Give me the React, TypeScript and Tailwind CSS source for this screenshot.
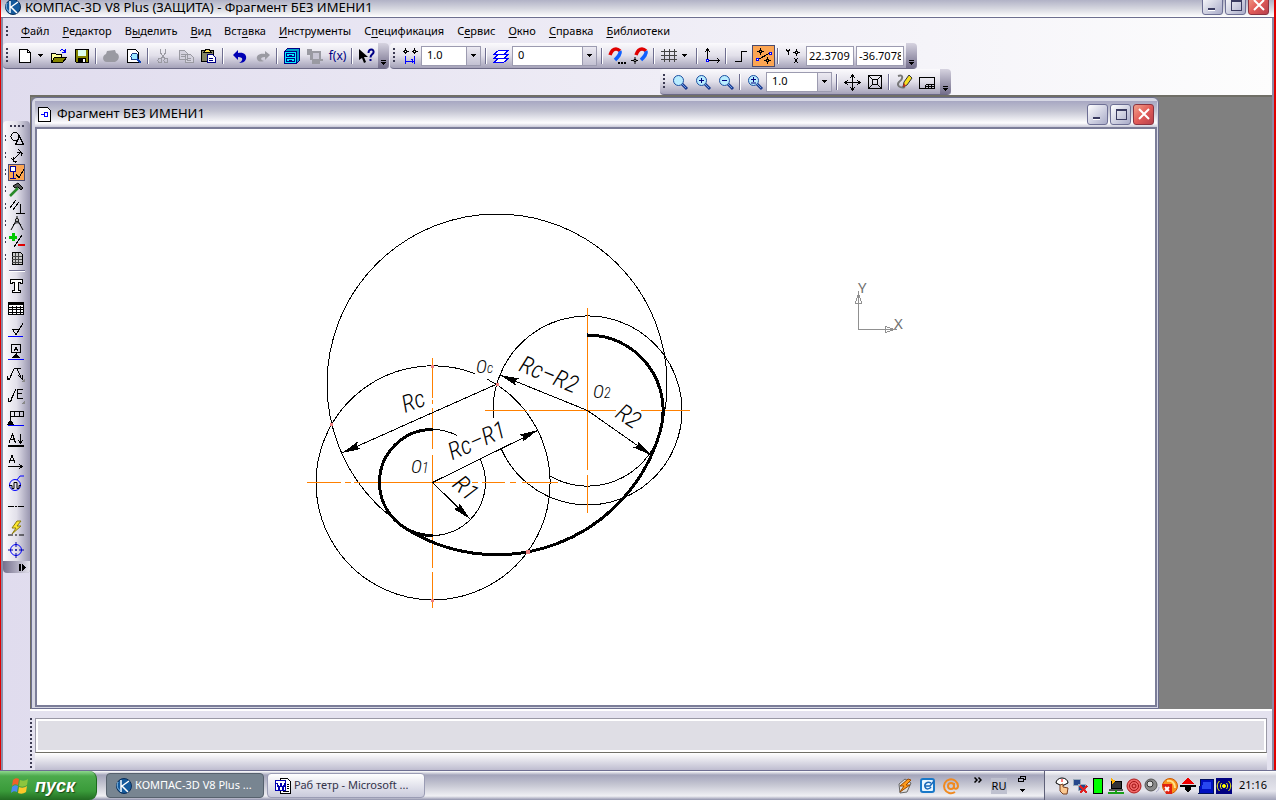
import type { ReactNode } from "react";
import { useState } from "react";

type IconProps = { children: ReactNode; smooth?: boolean };

function Icon({ children, smooth }: IconProps) {
  return (
    <svg
      width="16"
      height="16"
      viewBox="0 0 16 16"
      fill="none"
      stroke="#000"
      shapeRendering={smooth ? "auto" : "crispEdges"}
      className="block shrink-0 overflow-visible"
      aria-hidden="true"
    >
      {children}
    </svg>
  );
}

const icons: Record<string, ReactNode> = {
  new: (
    <Icon>
      <path d="M2.5 1.5h8l3 3v10h-11z" fill="#fff" />
      <path d="M10.5 1.5v3h3" />
    </Icon>
  ),
  open: (
    <Icon>
      <path d="M0.5 14V5.5h4l1 1h5v3" fill="#ffff9c" />
      <path d="M0.5 14.5l3-5h12l-4 5z" fill="#848400" />
      <path d="M9 3c1-2 4-2 5 1M14.5 1v3.5h-4" stroke="#00f" />
    </Icon>
  ),
  save: (
    <Icon>
      <path d="M1.5 1.5h13v13h-12l-1-1z" fill="#848400" />
      <path d="M4 2h8v6H4z" fill="#dfe" stroke="none" />
      <path d="M4 10h8v4H4z" fill="#000" stroke="none" />
      <path d="M9 11h2v3H9z" fill="#fff" stroke="none" />
    </Icon>
  ),
  print: (
    <Icon smooth>
      <path d="M4 3l8-1 1 3c4 1 4 7-1 9H4C-1 14-1 7 3 6z" fill="#9a9aa2" stroke="none" />
    </Icon>
  ),
  preview: (
    <Icon>
      <path d="M1.5 1.5h8l3 3v10h-11z" fill="#fff" />
      <circle cx="8.500" cy="8.500" r="3.500" fill="#9ce7ff" stroke="#1b3a8a" />
      <path d="M11 11l4 4" stroke="#1040b0" strokeWidth="2" />
    </Icon>
  ),
  cut: (
    <Icon>
      <g stroke="#9a9aa2">
        <path d="M5.500 1v4l4 5M10.500 1v4l-4 5" />
        <circle cx="5" cy="12.500" r="2" />
        <circle cx="11" cy="12.500" r="2" />
      </g>
    </Icon>
  ),
  copy: (
    <Icon>
      <g stroke="#9a9aa2" fill="#d4d2de">
        <path d="M1.500 2.500h5l3 3v6h-8zM7.500 6.500h5l3 3v5h-8z" />
        <path d="M3 6h4M3 8h4M9 10h4M9 12h4" />
      </g>
    </Icon>
  ),
  paste: (
    <Icon>
      <path d="M0.500 2.500h12v11h-12z" fill="#848463" />
      <path d="M3 4l2-3h3l2 3z" fill="#ffe34d" />
      <path d="M6.500 6.500h5l3 3v5h-8z" fill="#fff" stroke="#000084" />
      <path d="M8 10h4M8 12h4" stroke="#000084" />
    </Icon>
  ),
  undo: (
    <Icon smooth>
      <path d="M1 7l5-5v3c6-1 9 2 8 6-1 3-4 4-7 4 4-2 5-6-1-6v3z" fill="#0000b4" stroke="none" />
    </Icon>
  ),
  redo: (
    <Icon smooth>
      <path d="M15 7l-5-4v3C4 5 1 8 2 11c1 3 4 3 7 2-4-1-4-4 1-4v3z" fill="#9a9aa2" stroke="none" />
    </Icon>
  ),
  library: (
    <Icon>
      <path d="M0.500 3.500l3-3h12v12l-3 3h-12z" fill="#00a0c8" stroke="#000084" />
      <path d="M0.500 3.500h12v12h-12z" fill="#00f0ff" stroke="#000084" />
      <path d="M2.500 5.500h8v3h-8zM2.500 10.500h8v3h-8zM5 7.500h3M5 12.500h3" stroke="#000084" />
    </Icon>
  ),
  frame: (
    <Icon>
      <path d="M0 1h5v2h9v8h2v2h-3v3H5v-4H3V7H0z" fill="#9a9aa2" stroke="none" />
      <path d="M6 5h6v6H6z" fill="#c8c6d4" stroke="none" />
    </Icon>
  ),
  whatsThis: (
    <Icon smooth>
      <path d="M0 1v11l3-2 2 5 2-1-2-5h4z" fill="#000" stroke="none" />
      <path d="M9.500 5c0-5 6-4 5-.5-.4 2-3 2-3 5" stroke="#000084" strokeWidth="2" />
      <path d="M10.500 11h2v2h-2z" fill="#000084" stroke="none" />
    </Icon>
  ),
  step: (
    <Icon>
      <path d="M3.500 0v6M0.500 3.500h6M12.500 0v6M9.500 3.500h6" />
      <path d="M2.500 2.500h2v2h-2zM11.500 2.500h2v2h-2z" fill="#fff" />
      <path d="M3.500 8v8M12.500 8v8M3.500 13.500h8M9.500 11l2 2.500-2 2" stroke="#00f" />
    </Icon>
  ),
  layers: (
    <Icon>
      <g stroke="#00f" fill="#fff">
        <path d="M0.500 14.500l5-4h10l-5 4z" />
        <path d="M0.500 10.500l5-4h10l-5 4z" />
        <path d="M0.500 6.500l5-4h10l-5 4z" />
      </g>
    </Icon>
  ),
  magnetDots: (
    <Icon smooth>
      <path d="M1 7c1-3 3-6 6-6 2 0 3 1 4 2" stroke="#e00000" strokeWidth="3.500" />
      <path d="M11 3c1 3-2 6-5 9" stroke="#1060ff" strokeWidth="3.500" />
      <path d="M9 14h2v2H9zM12 14h2v2h-2zM15 14h2v2h-2z" fill="#000" stroke="none" />
    </Icon>
  ),
  magnet: (
    <Icon smooth>
      <path d="M4 7c1-3 3-6 6-6 2 0 3 1 4 2" stroke="#e00000" strokeWidth="3.500" />
      <path d="M14 3c1 3-2 6-5 9" stroke="#1060ff" strokeWidth="3.500" />
      <path d="M3 9v7M-1 12.500h7" />
      <path d="M2 11.500h2v2H2z" fill="#fff" />
    </Icon>
  ),
  grid: (
    <Icon>
      <path d="M3.500 1v13M8.500 1v13M13.500 1v13M0 3.500h16M0 7.500h16M0 11.500h16" stroke="#444" />
    </Icon>
  ),
  axes: (
    <Icon>
      <path d="M3.500 12V1M1 4l2.500-3L6 4M4 12.500h12M13 10l2.500 2.500L13 15" />
      <path d="M2.500 11.500h2v2h-2z" fill="#fff" stroke="#00f" />
    </Icon>
  ),
  ortho: (
    <Icon>
      <path d="M2 13.500h6v-10h6" />
    </Icon>
  ),
  snap: (
    <Icon>
      <path d="M4.500 0v7M1 3.500h7M11.500 9v7M8 12.500h7" />
      <path d="M3.500 2.500h2v2h-2zM10.500 11.500h2v2h-2z" fill="#f8a050" />
      <path d="M1 12l13-7" />
      <path d="M0.500 10.500h2v2h-2zM13.500 4.500h2v2h-2z" fill="#fff" stroke="#00f" />
    </Icon>
  ),
  yx: (
    <Icon>
      <path d="M1 1l2 3 2-3M3 4v3M9 10l4 5M13 10l-4 5M11.500 1v7M8 4.500h7" />
      <path d="M10.500 3.500h2v2h-2z" fill="#fff" />
    </Icon>
  ),
  zoomArea: <Magnifier />,
  zoomIn: <Magnifier sign="M3.500 6h5M6 3.500v5" />,
  zoomOut: <Magnifier sign="M3.500 6h5" />,
  zoomScale: <Magnifier sign="M3.500 5h5M6 2.500v5M3.500 8.500h5" />,
  pan: (
    <Icon>
      <path d="M8.500 1v14M1 8.500h15M6 4l2.500-3L11 4M6 13l2.500 3 2.500-3M4 6L1 8.500 4 11M13 6l3 2.500-3 2.500" />
    </Icon>
  ),
  fit: (
    <Icon>
      <path d="M1.500 1.500h13v13h-13zM5.500 5.500h5v5h-5zM2 2l4 4M14 2l-4 4M2 14l4-4M14 14l-4-4" />
    </Icon>
  ),
  refresh: (
    <Icon smooth>
      <path d="M2 2c6-2 5 3 1 6-3 3 1 7 6 5" stroke="#777" strokeWidth="2" />
      <path d="M7 13l1-5 5-7 3 3-5 7z" fill="#f8e020" stroke="#333" />
      <path d="M7 13l3-1-2-3z" fill="#d03020" stroke="none" />
    </Icon>
  ),
  layout: (
    <Icon>
      <path d="M0.500 3.500h15v11h-15zM6.500 10.500h9M9.500 10.500v4M12.500 10.500v4M6.500 10.500v4M6.500 12.500h9" />
    </Icon>
  ),
};

function Magnifier({ sign }: { sign?: string }) {
  return (
    <Icon smooth>
      <path d="M10 10l5 5" stroke="#1a3a90" strokeWidth="3" />
      <path d="M10 10l4 4" stroke="#6ca0e8" />
      <circle cx="6.500" cy="6.500" r="5" fill="#b8ecff" stroke="#1c4fa0" />
      {sign && <path d={sign} stroke="#00007c" transform="translate(.5 .5)" />}
    </Icon>
  );
}

function ToolButton({ name, label, active }: { name: string; label: string; active?: boolean }) {
  return (
    <button
      aria-label={label}
      className={
        active
          ? "flex h-[22px] w-[23px] shrink-0 items-center justify-center border border-[#4b4b6f] bg-[#fca552]"
          : "flex h-[22px] w-[23px] shrink-0 items-center justify-center"
      }
    >
      {icons[name]}
    </button>
  );
}

function Separator() {
  return (
    <span className="flex w-[6px] shrink-0 justify-center">
      <span className="h-4 w-[2px] border-r border-white bg-[#6e6d8f]" />
    </span>
  );
}

function Grip() {
  return <span className="mx-[3px] h-[15px] w-[2px] shrink-0 bg-[repeating-linear-gradient(#3c3b52_0_2px,transparent_2px_4px)]" />;
}

function DropArrow() {
  return (
    <svg width="5" height="3" viewBox="0 0 5 3" className="block" shapeRendering="crispEdges" aria-hidden="true">
      <path d="M0 0h5L2.500 3z" />
    </svg>
  );
}

function Overflow() {
  return (
    <button
      aria-label="Параметры панели"
      className="ml-auto flex h-[25px] w-[11px] shrink-0 flex-col items-center justify-end gap-px rounded-r-sm bg-gradient-to-b from-[#d6d3e0] to-[#75708c] pb-[3px]"
    >
      <span className="h-px w-[5px] bg-black" />
      <DropArrow />
    </button>
  );
}

function Toolbar({ children, label }: { children: ReactNode; label: string }) {
  return (
    <div
      role="toolbar"
      aria-label={label}
      className="flex h-[26px] items-center rounded-sm border-b border-[#6c6a86] bg-gradient-to-b from-[#fbfafd] via-[#e2e0ea] to-[#a5a2b9]"
    >
      {children}
    </div>
  );
}

function Combo({ label, options, width }: { label: string; options: string[]; width: string }) {
  const [value, setValue] = useState(options[0]);

  return (
    <span className={`relative flex h-5 shrink-0 border border-[#9c9bb0] bg-white ${width}`}>
      <select
        aria-label={label}
        value={value}
        onChange={(e) => setValue(e.target.value)}
        className="w-full appearance-none bg-transparent pl-[5px] text-[11px] outline-none"
      >
        {options.map((option) => (
          <option key={option}>{option}</option>
        ))}
      </select>
      <span className="pointer-events-none absolute inset-y-0 right-0 flex w-[14px] items-center justify-center border-l border-[#9c9bb0] bg-gradient-to-b from-[#eceaf2] to-[#c3c1d2]">
        <DropArrow />
      </span>
    </span>
  );
}

function CoordInput({ label, initial }: { label: string; initial: string }) {
  const [value, setValue] = useState(initial);
  return (
    <input
      aria-label={label}
      value={value}
      onChange={(e) => setValue(e.target.value)}
      className="mr-[2px] h-5 w-12 shrink-0 border border-[#9c9bb0] bg-white px-[2px] text-[11px] outline-none"
    />
  );
}

function WindowButtons() {
  const base = "flex h-[21px] w-[21px] items-center justify-center rounded-[3px] border border-[#6d6f94]";
  return (
    <div className="flex gap-[2px]">
      <button aria-label="Свернуть" className={`${base} bg-gradient-to-br from-white to-[#a9abc8]`}>
        <Icon>
          <path d="M3 11h7v3H3z" fill="#fff" stroke="none" />
          <path d="M3 11h7v2H3z" fill="#3a3b60" stroke="none" />
        </Icon>
      </button>
      <button aria-label="Развернуть" className={`${base} bg-gradient-to-br from-white to-[#a9abc8]`}>
        <Icon>
          <path d="M3.500 3.500h10v10h-10z" stroke="#3a3b60" />
          <path d="M3 3h11v2H3z" fill="#3a3b60" stroke="none" />
        </Icon>
      </button>
      <button aria-label="Закрыть" className={`${base} border-[#8c3340] bg-gradient-to-br from-[#f0a08c] via-[#e25b58] to-[#b8404c]`}>
        <Icon smooth>
          <path d="M3 3l10 10M13 3L3 13" stroke="#fff" strokeWidth="2" />
        </Icon>
      </button>
    </div>
  );
}

function KompasLogo() {
  return (
    <svg width="16" height="16" viewBox="0 0 16 16" className="shrink-0" fill="none" aria-hidden="true">
      <circle cx="8" cy="8" r="7.500" fill="#155a9c" stroke="#0a2d58" />
      <path d="M5 2v12M13 3L6 8l6 6" stroke="#fff" strokeWidth="1.500" />
      <path d="M2 4c-2 4 0 8 3 9" stroke="#8cc4f0" />
    </svg>
  );
}

// each entry: text before the hot key, the hot key, the rest
const menu = [
  ["", "Ф", "айл"],
  ["", "Р", "едактор"],
  ["В", "ы", "делить"],
  ["", "В", "ид"],
  ["Вст", "а", "вка"],
  ["", "И", "нструменты"],
  ["С", "п", "ецификация"],
  ["С", "е", "рвис"],
  ["", "О", "кно"],
  ["", "С", "правка"],
  ["", "Б", "иблиотеки"],
];

const modes: { label: string; active?: boolean; icon: ReactNode }[] = [
  { label: "Геометрия", icon: <Icon><circle cx="6" cy="5.500" r="4" /><path d="M6.500 13.500l4-8 4 8z" fill="#d9d7e4" /></Icon> },
  { label: "Размеры", icon: <Icon><path d="M4 12l8-8M4 9v4h4M8 4h4v4M2 10l5 5M9 1l5 5" /></Icon> },
  {
    label: "Обозначения",
    active: true,
    icon: <Icon><path d="M1.500 1.500h5v5h-5z" fill="#fff" stroke="#00009c" /><path d="M4 7v6M1 13.500h6" stroke="#00009c" /><path d="M7 9l3 4 5-9" /></Icon>,
  },
  { label: "Редактирование", icon: <Icon smooth><path d="M4 4l5-3 5 5-2 2-3-3-3 1z" fill="#555" /><path d="M9 6l-8 8" stroke="#2a8a2a" strokeWidth="2.500" /></Icon> },
  { label: "Параметризация", icon: <Icon><path d="M1 9l6-8M4 11l6-8M11.500 5v9M7 14.500h9" /></Icon> },
  { label: "Измерения", icon: <Icon smooth><path d="M8 3L2 14M8 3l6 11M4 9c3-3 6-3 8 0M8 0v3" /><circle cx="8" cy="4" r="1.500" fill="#fff" /></Icon> },
  { label: "Выделение", icon: <Icon><path d="M4.500 0v8M0 4h8" stroke="#00c800" strokeWidth="3" /><path d="M13 2L5 14" /><path d="M9 12h7" stroke="#e00000" strokeWidth="2" /></Icon> },
  { label: "Спецификация", icon: <Icon><path d="M3.500 2.500h8l2 2v10h-10z" fill="#ccc" /><path d="M6.500 3v11M9.500 3v11M3 6.500h10M3 9.500h10M3 12.500h10" stroke="#444" /></Icon> },
];

const marks: { label: string; icon: ReactNode }[] = [
  { label: "Ввод текста", icon: <Icon><path d="M2.500 1.500h12v4h-2v-1h-2v8h2v2h-8v-2h2v-8h-2v1h-2z" fill="#fff" /></Icon> },
  { label: "Ввод таблицы", icon: <Icon><path d="M0.500 2.500h15v12h-15z" fill="#fff" /><path d="M1 4h14" strokeWidth="2" /><path d="M0 7.500h16M0 9.500h16M0 12.500h16M4.500 6v8M8.500 6v8M12.500 6v8" /></Icon> },
  { label: "Шероховатость", icon: <Icon><path d="M4 7.500h8M5 8l3 5 7-12" /><path d="M0 14.500h15" stroke="#00f" /></Icon> },
  { label: "База", icon: <Icon><path d="M3.500 0.500h9v8h-9zM8 8v4M6.500 7l1-4h1l1 4M6.500 5.500h3" /><path d="M5 13l3-3 3 3z" fill="#000" /><path d="M0 15.500h16" stroke="#00f" /></Icon> },
  { label: "Линия-выноска", icon: <Icon><path d="M6 2.500h7M6 3L1 14M9 3l4 8M-1 10v4l3-2M10 9l4 4v-4" /><path d="M17 12v4h-4z" fill="#888" stroke="none" /></Icon> },
  { label: "Обозначение позиций", icon: <Icon><path d="M8 1L2 14M0 10l1 4 3-2M15 1.500H9.500v9H15M9 5.500h5" /><path d="M17 12v4h-4z" fill="#888" stroke="none" /></Icon> },
  { label: "Допуск формы", icon: <Icon><path d="M2.500 14V1.500h13v5h-13M6.500 1v5M11.500 1v5" /><path d="M0 14l2.500-4L5 14z" fill="#000" /><path d="M0 15.500h16" stroke="#00f" /></Icon> },
  { label: "Линия разреза", icon: <Icon><path d="M1 11L4.500 2l3 9M2 7.500h5M12.500 2v9M10 8l2.500 3L15 8" /><path d="M0 14h16" strokeWidth="2" /></Icon> },
  { label: "Стрелка взгляда", icon: <Icon><path d="M1 9L4 1l3 8M2 6.500h4M0 12.500h14M11 10l3 2.500-3 2.500" /></Icon> },
  { label: "Выносной элемент", icon: <Icon smooth><circle cx="7" cy="9" r="5.500" stroke="#00f" /><path d="M9 4l3-4h4" stroke="#00f" /><path d="M1 9.500h3v3h2v-6h3v6h2v-3h2" /></Icon> },
  { label: "Осевая линия", icon: <Icon><path d="M0 8.500h6M7 8.500h2M10 8.500h6" /></Icon> },
  { label: "Автоосевая", icon: <Icon smooth><path d="M9 1L4 8h4l-4 6 9-8H9l4-5z" fill="#ffe92e" stroke="#8a7a10" /><path d="M0 15h5M7 15h2M11 15h5" /></Icon> },
  { label: "Обозначение центра", icon: <Icon smooth><circle cx="8" cy="8" r="5.500" stroke="#00f" /><path d="M8 0v5M8 7v2M8 11v5M0 8h5M7 8h2M11 8h5" stroke="#0000a0" /></Icon> },
];

function SidePanel() {
  return (
    <div className="w-[27px] shrink-0 pt-[26px]">
      <div
        role="toolbar"
        aria-label="Компактная панель"
        className="rounded-sm bg-gradient-to-r from-[#fbfafd] via-[#e2e0ea] to-[#9a97b0]"
      >
        <div className="flex h-[9px] items-center justify-center">
          <span className="h-[2px] w-[14px] bg-[repeating-linear-gradient(90deg,#3c3b52_0_2px,transparent_2px_4px)]" />
        </div>
        {modes.map((mode) => (
          <div key={mode.label} className="flex h-[17px] items-center">
            <span className="mx-[2px] h-[7px] w-px shrink-0 bg-[repeating-linear-gradient(#3c3b52_0_2px,transparent_2px_4px)]" />
            <button
              aria-label={mode.label}
              className={
                mode.active
                  ? "flex h-[17px] w-[17px] items-center justify-center border border-[#4b4b6f] bg-[#fca552]"
                  : "flex h-[17px] w-[17px] items-center justify-center"
              }
            >
              {mode.icon}
            </button>
          </div>
        ))}
        <div className="flex h-[9px] items-center justify-center">
          <span className="h-[2px] w-4 border-b border-white bg-[#6e6d8f]" />
        </div>
        {marks.map((mark) => (
          <button key={mark.label} aria-label={mark.label} className="flex h-[22px] w-[25px] items-center justify-center">
            {mark.icon}
          </button>
        ))}
        <button
          aria-label="Параметры панели"
          className="flex h-3 w-full items-center justify-end rounded-b-sm bg-gradient-to-r from-[#75708c] to-[#e6e4ee] pr-1"
        >
          <svg width="7" height="7" viewBox="0 0 7 7" shapeRendering="crispEdges" aria-hidden="true">
            <path d="M0 0h2v7H0zM3 0l4 3.500L3 7z" />
          </svg>
        </button>
      </div>
    </div>
  );
}

// dimension arrow head, tip at x/y, angle in degrees
function ArrowHead({ x, y, angle }: { x: number; y: number; angle: number }) {
  return <path d="M0 0l-19-4 3 4-3 4z" fill="#000" stroke="none" transform={`translate(${x} ${y}) rotate(${angle})`} />;
}

function DimText({ x, y, angle, children }: { x: number; y: number; angle: number; children: string }) {
  return (
    <text textAnchor="middle" transform={`translate(${x} ${y}) rotate(${angle})`} className="text-[24px]">
      {children}
    </text>
  );
}

function Drawing() {
  return (
    <svg className="block h-full w-full" role="img" aria-label="Сопряжение окружностей">
      <g transform="translate(-37 -129)" fill="none" stroke="#000" shapeRendering="crispEdges">
        <g>
          <circle cx="497" cy="384" r="170" />
          <path d="M487 379A117 117 0 1 1 475 373.600" />
          <path d="M493.300 418A94.500 94.500 0 1 1 501 448.500" />
          <path d="M432.500 429.500A53 53 0 0 1 457 435.500M480 459A53 53 0 0 1 432.500 535.500" />
          <path d="M660 432A75.500 75.500 0 0 1 549 475.500" />
        </g>

        <g stroke="#ff8000">
          <path d="M307 482.500h34M345 482.500h6M354 482.500h113M472 482.500h6M482 482.500h23M510 482.500h6M522 482.500h36" />
          <path d="M432.500 358v40M432.500 400v4M432.500 408v41M432.500 455v113M432.500 572v36" />
          <path d="M485 410.500h42M529 410.500h87M641 410.500h21M664 410.500h26" />
          <path d="M587.500 308v162M587.500 475v38" />
        </g>

        <g strokeWidth="3">
          <path d="M432.500 429.500A53 53 0 1 0 432.500 535.500" />
          <path d="M587.500 335A75.500 75.500 0 0 1 660 432A170 170 0 0 1 403.500 526.900" />
        </g>

        <path d="M497 384L342 453M432.500 482.500L537 431M432.500 482.500l37.500 36.500M587.500 410.500L500 375M587.500 410.500L651 455" />
        <ArrowHead x={342} y={453} angle={156} />
        <ArrowHead x={538} y={430} angle={-26} />
        <ArrowHead x={470} y={519} angle={44} />
        <ArrowHead x={500} y={375} angle={202} />
        <ArrowHead x={651} y={455} angle={35} />

        <g fill="#f08080" stroke="none">
          <path d="M431 365h3v3h-3zM496 383h3v3h-3zM330 423h3v3h-3zM431 599h3v3h-3zM526 550h4v4h-4z" />
        </g>

        <g stroke="none" fill="#000" className="font-['Roboto_Condensed','Liberation_Sans_Narrow','Roboto',sans-serif] font-light italic">
          <DimText x={416} y={409} angle={-20}>Rc</DimText>
          <DimText x={480} y={448} angle={-24}>Rc–R1</DimText>
          <DimText x={460} y={494} angle={43}>R1</DimText>
          <DimText x={546} y={382} angle={22}>Rc–R2</DimText>
          <DimText x={624} y={423} angle={33}>R2</DimText>
          <text x="476" y="373" className="text-[19px]">O<tspan className="text-[14px]">c</tspan></text>
          <text x="411" y="473" className="text-[19px]">O<tspan className="text-[14px]">1</tspan></text>
          <text x="593" y="398" className="text-[19px]">O<tspan className="text-[14px]">2</tspan></text>
        </g>

        <g stroke="#909090">
          <path d="M858.500 293v36.500H895M858.500 293l-3 10h6zM895 329.500l-10-3v6z" />
          <g stroke="none" fill="#707070" className="text-[15px]">
            <text x="858" y="293">Y</text>
            <text x="894" y="329">X</text>
          </g>
        </g>
      </g>
    </svg>
  );
}

function ChildWindow() {
  return (
    <section className="flex w-[1128px] max-w-full flex-col rounded-t-md border border-[#6d6f8f] bg-[#d6d7e4] pt-[3px] pr-px pb-px pl-[3px]">
      <header className="flex h-[26px] shrink-0 items-center gap-[6px] bg-[linear-gradient(#a7a7c2_0,#c3c4d2_10px,#fdfdfe_22px,#c8c8d8_26px)] pr-[3px] pl-[3px]">
        <svg width="13" height="15" viewBox="0 0 13 15" fill="none" shapeRendering="crispEdges" aria-hidden="true">
          <path d="M0.500 0.500h9l3 3v11h-12z" fill="#fff" stroke="#000" />
          <path d="M3 7.500h3M6.500 5.500h3v4h-3z" stroke="#00f" />
        </svg>
        <h2 className="flex-1 text-[13px]">Фрагмент БЕЗ ИМЕНИ1</h2>
        <WindowButtons />
      </header>
      <div className="min-h-0 flex-1 border-2 border-[#7b7d98] bg-white">
        <Drawing />
      </div>
    </section>
  );
}

const tray: ReactNode[] = [
  <Icon smooth><path d="M2 5a6 5 0 0 1 12 0l-6 3z" fill="#fff" /><path d="M6 7v6l3 3h4l1-6-5-1V6z" fill="#fcc890" stroke="#7a4020" /><path d="M8 1v3" stroke="red" /></Icon>,
  <Icon><path d="M1 1h7v6H1zM6 6h7v6H6z" fill="#24468c" stroke="#9ab" /><path d="M8 8l7 7M15 8l-7 7" stroke="#e02020" strokeWidth="2" /></Icon>,
  <Icon><path d="M3.500 0.500h9v15h-9z" fill="#00ff00" /></Icon>,
  <Icon><path d="M3 3h10v7H3z" fill="#333" /><path d="M1 11h14v2H1z" fill="#555" stroke="none" /><path d="M0 15h16M8 12v3" stroke="#18a018" strokeWidth="2" /><path d="M3 0l5 3-4 3z" fill="#ffb000" stroke="none" /></Icon>,
  <Icon smooth><circle cx="8" cy="8" r="7" fill="#f06868" stroke="#b01818" /><circle cx="8" cy="8" r="4.500" stroke="#a01010" /><circle cx="8" cy="8" r="2" stroke="#a01010" /></Icon>,
  <Icon smooth><circle cx="7" cy="7" r="6" fill="#8a8a8a" stroke="#555" /><circle cx="6" cy="6" r="3" fill="#ddd" stroke="#333" /><path d="M12 14c2-1 3-3 3-5" stroke="#aac" /></Icon>,
  <Icon smooth><circle cx="8" cy="8" r="7.500" fill="#f8941d" stroke="#d05a00" /><path d="M5 3c5-1 8 2 8 7" stroke="#ffe38a" strokeWidth="2" /><path d="M0 6h10v10H4z" fill="#e02010" stroke="none" /><path d="M3 9l4 4M7 9l-4 4" stroke="#fff" strokeWidth="2" /></Icon>,
  <Icon><path d="M8 0L1 6h14z" fill="#f00000" stroke="none" /><path d="M0 7.500h16" strokeWidth="2" /><path d="M5 9h6v2l-3 4-3-4z" fill="#000" stroke="none" /></Icon>,
  <Icon><path d="M3 1h12v14H1z" fill="#0010c0" stroke="#001060" /><path d="M5 4h8v7H4z" fill="#2848f0" stroke="none" /></Icon>,
  <Icon smooth><path d="M0 0h16v16H0z" fill="#000080" stroke="none" /><g stroke="#ffff00"><circle cx="8" cy="8" r="1.500" fill="#ffff00" /><path d="M5.500 5c-1.500 2-1.500 4 0 6M10.500 5c1.500 2 1.500 4 0 6M3.500 3c-3 3-3 7 0 10M12.500 3c3 3 3 7 0 10" /></g></Icon>,
];

function Taskbar() {
  return (
    <footer className="flex h-[30px] shrink-0 items-stretch border-t border-[#6e6f92] bg-[linear-gradient(#fff_0,#a4a5bb_4px,#c6c7d3_14px,#f0f0f4_25px,#8f91ab_29px)]">
      <button className="flex w-[97px] items-center gap-[6px] rounded-r-lg border-r border-[#1b6a1b] bg-[linear-gradient(#8fd88f_0,#4caa4c_5px,#3a9b3a_20px,#226b22_29px)] pl-[11px] text-[18px] font-bold text-white italic [text-shadow:1px_1px_1px_#1b4a1b]">
        <svg width="18" height="18" viewBox="0 0 18 18" aria-hidden="true">
          <path d="M2 3c2-2 4-2 6-1L7 8C5 7 3 7 1 9z" fill="#f0602a" />
          <path d="M9 3c3 1 5 1 8-1l-1 6c-3 2-5 2-8 1z" fill="#8cc63e" />
          <path d="M1 10c2-2 4-2 6-1l-1 6c-2-1-4-1-6 1z" fill="#4a8cf0" />
          <path d="M8 10c3 1 5 1 8-1l-1 6c-3 2-5 2-8 1z" fill="#fcc82a" />
        </svg>
        <span className="font-['Liberation_Sans',sans-serif] leading-[18px]">пуск</span>
      </button>

      <nav className="flex flex-1 items-center gap-[3px] pl-[9px] text-[11px]">
        <button className="flex h-[25px] w-[158px] items-center gap-[3px] rounded-sm border border-[#56616d] bg-[#788591] px-[9px] text-white">
          <KompasLogo />
          <span className="truncate">КОМПАС-3D V8 Plus ...</span>
        </button>
        <button className="flex h-[25px] w-[158px] items-center gap-[3px] rounded-sm border border-[#9a9cb4] bg-gradient-to-b from-white to-[#c9cadb] px-[7px] text-[#33334a]">
          <Icon>
            <path d="M5.500 0.500h7l3 3v12h-10z" fill="#fff" />
            <path d="M0.500 2.500h10v10h-10z" fill="#fff" stroke="#0000b0" />
            <path d="M2 5l2 6 2-5 2 5 2-6" stroke="#0000b0" strokeWidth="1.500" />
            <path d="M12 6h2M12 8h2M12 10h2M8 13h6" />
          </Icon>
          <span className="truncate">Раб тетр - Microsoft ...</span>
        </button>
      </nav>

      <div className="flex items-center gap-[7px] pr-[14px] text-[11px]">
        <button aria-label="Winamp">
          <Icon smooth><path d="M2 6l6-5 6 4-4 9-7 1z" fill="#ddd" stroke="#666" /><path d="M11 1L3 8h4l-4 6 10-7H9l5-5z" fill="#ff9a1a" stroke="#9c4a00" /></Icon>
        </button>
        <button aria-label="Outlook Express">
          <Icon smooth><rect x="1" y="1" width="13" height="13" rx="2" fill="#e8f6ff" stroke="#1878c8" strokeWidth="2" /><path d="M11 5C7 3 4 6 5 9c1 3 5 2 6 0M5 8h5l4-5" stroke="#1868b8" strokeWidth="1.500" /></Icon>
        </button>
        <button aria-label="Агент">
          <Icon smooth><circle cx="8" cy="8" r="3" stroke="#f08a20" strokeWidth="2" /><path d="M11 5v4c0 3 4 2 4-1a7 7 0 1 0-3 6" stroke="#f08a20" strokeWidth="2" /></Icon>
        </button>
        <button aria-label="Ещё" className="mb-3 ml-2 w-[10px]">
          <svg width="8" height="6" viewBox="0 0 8 6" fill="none" stroke="#000" aria-hidden="true">
            <path d="M0.500 0.500L3 3 0.500 5.500M4.500 0.500L7 3 4.500 5.500" strokeWidth="1.500" />
          </svg>
        </button>
        <button className="h-4 w-4 bg-[#bfc1cf] text-center leading-4">RU</button>
        <button aria-label="Языковая панель" className="flex w-4 flex-col items-center gap-[7px] pb-1">
          <svg width="8" height="6" viewBox="0 0 8 6" fill="none" stroke="#000" shapeRendering="crispEdges" aria-hidden="true">
            <path d="M2 2V0.500h5.500v3H6M0.500 2.500h5v3h-5z" />
          </svg>
          <DropArrow />
        </button>
      </div>

      <div className="flex w-[232px] items-center gap-[2px] border-l border-[#5e6078] bg-[linear-gradient(#fff_0,#d2d3dd_5px,#e4e4ec_20px,#a0a2b8_29px)] pl-[9px] text-[11px]">
        {tray.map((icon, i) => (
          <span key={i}>{icon}</span>
        ))}
        <time className="ml-[5px]">21:16</time>
      </div>
    </footer>
  );
}

export default function App() {
  return (
    <div className="flex h-screen flex-col overflow-hidden bg-[#e0dff0] font-['Noto_Sans',sans-serif] text-[11px] text-black">
      <div className="flex min-h-0 flex-1 flex-col border-r-2 border-l border-[#e00000]">
        <header className="flex h-[18px] shrink-0 items-end gap-1 border-b border-[#6d6f8f] bg-gradient-to-b from-[#b1b2c6] via-[#d5d6df] to-white pr-[5px] pb-[2px] pl-1">
          <KompasLogo />
          <h1 className="flex-1 text-[13px] leading-[16px]">КОМПАС-3D V8 Plus (ЗАЩИТА) - Фрагмент БЕЗ ИМЕНИ1</h1>
          <WindowButtons />
        </header>

        <div className="flex min-h-0 flex-1 flex-col border-x-2 border-[#8a8ba6] bg-gradient-to-r from-[#e0dcee] to-[#fdfdfd]">
          <nav className="flex h-[25px] shrink-0 items-center gap-[13px] pt-[2px] pl-[3px]" aria-label="Главное меню">
            <span className="h-[11px] w-[2px] shrink-0 bg-[repeating-linear-gradient(#3c3b52_0_2px,transparent_2px_4px)]" />
            {menu.map(([before, key, after]) => (
              <button key={before + key + after} className="whitespace-nowrap">
                {before}
                <u className="underline-offset-2">{key}</u>
                {after}
              </button>
            ))}
          </nav>

          <div className="flex shrink-0 gap-px">
            <Toolbar label="Стандартная">
              <Grip />
              <span className="w-[2px]" />
              <ToolButton name="new" label="Создать" />
              <span className="flex w-[9px] justify-center"><DropArrow /></span>
              <span className="w-[2px]" />
              <ToolButton name="open" label="Открыть" />
              <ToolButton name="save" label="Сохранить" />
              <Separator />
              <ToolButton name="print" label="Печать" />
              <ToolButton name="preview" label="Предварительный просмотр" />
              <Separator />
              <ToolButton name="cut" label="Вырезать" />
              <ToolButton name="copy" label="Копировать" />
              <ToolButton name="paste" label="Вставить" />
              <Separator />
              <span className="w-[2px]" />
              <ToolButton name="undo" label="Отменить" />
              <ToolButton name="redo" label="Повторить" />
              <Separator />
              <ToolButton name="library" label="Менеджер библиотек" />
              <ToolButton name="frame" label="Менеджер документа" />
              <button className="w-[23px] text-center text-[12px] text-[#000084]">f(x)</button>
              <Separator />
              <ToolButton name="whatsThis" label="Что это такое?" />
              <Overflow />
            </Toolbar>

            <Toolbar label="Текущее состояние">
              <Grip />
              <ToolButton name="step" label="Шаг курсора" />
              <Combo label="Шаг" options={["1.0", "5.0", "10.0"]} width="w-[60px]" />
              <span className="w-[2px]" />
              <Separator />
              <ToolButton name="layers" label="Слои" />
              <Combo label="Слой" options={["0", "1"]} width="w-[85px]" />
              <span className="w-[2px]" />
              <Separator />
              <ToolButton name="magnetDots" label="Глобальные привязки" />
              <ToolButton name="magnet" label="Запретить привязки" />
              <Separator />
              <ToolButton name="grid" label="Сетка" />
              <span className="flex w-[9px] justify-center"><DropArrow /></span>
              <span className="w-[5px]" />
              <Separator />
              <ToolButton name="axes" label="Система координат" />
              <Separator />
              <ToolButton name="ortho" label="Ортогональное черчение" />
              <ToolButton name="snap" label="Округление" active />
              <Separator />
              <ToolButton name="yx" label="Координаты" />
              <span className="w-[2px]" />
              <CoordInput label="Координата X" initial="22.3709" />
              <CoordInput label="Координата Y" initial="-36.7078" />
              <Overflow />
            </Toolbar>
          </div>

          <div className="flex shrink-0 pl-[657px]">
            <Toolbar label="Вид">
              <Grip />
              <ToolButton name="zoomArea" label="Увеличить рамкой" />
              <ToolButton name="zoomIn" label="Увеличить масштаб" />
              <ToolButton name="zoomOut" label="Уменьшить масштаб" />
              <Separator />
              <ToolButton name="zoomScale" label="Приблизить" />
              <Combo label="Масштаб" options={["1.0", "2.0"]} width="w-[66px]" />
              <span className="w-[2px]" />
              <Separator />
              <ToolButton name="pan" label="Сдвинуть" />
              <ToolButton name="fit" label="Показать все" />
              <Separator />
              <ToolButton name="refresh" label="Обновить" />
              <ToolButton name="layout" label="Листы" />
              <span className="w-[2px]" />
              <Overflow />
            </Toolbar>
          </div>

          <div className="flex min-h-0 flex-1">
            <SidePanel />
            <main className="flex min-w-0 flex-1 border-t-2 border-l border-[#6f6e66] bg-[#808080]">
              <ChildWindow />
            </main>
          </div>

          <div className="ml-[27px] flex h-[61px] shrink-0 gap-[3px] border-t-2 border-white bg-[#e4e2ef] pt-[7px]">
            <span className="w-[2px] bg-[repeating-linear-gradient(#3c3b52_0_2px,transparent_2px_4px)]" />
            <div className="mr-[5px] flex flex-1 flex-col">
              <div className="h-[35px] border border-b-[#6f6e66] border-[#9a99a6] bg-white p-[2px]">
                <div className="h-full bg-[#dfdee5]" />
              </div>
              <div className="flex-1 bg-gradient-to-b from-white to-[#bfbdd0]" />
            </div>
          </div>
        </div>
      </div>
      <Taskbar />
    </div>
  );
}
